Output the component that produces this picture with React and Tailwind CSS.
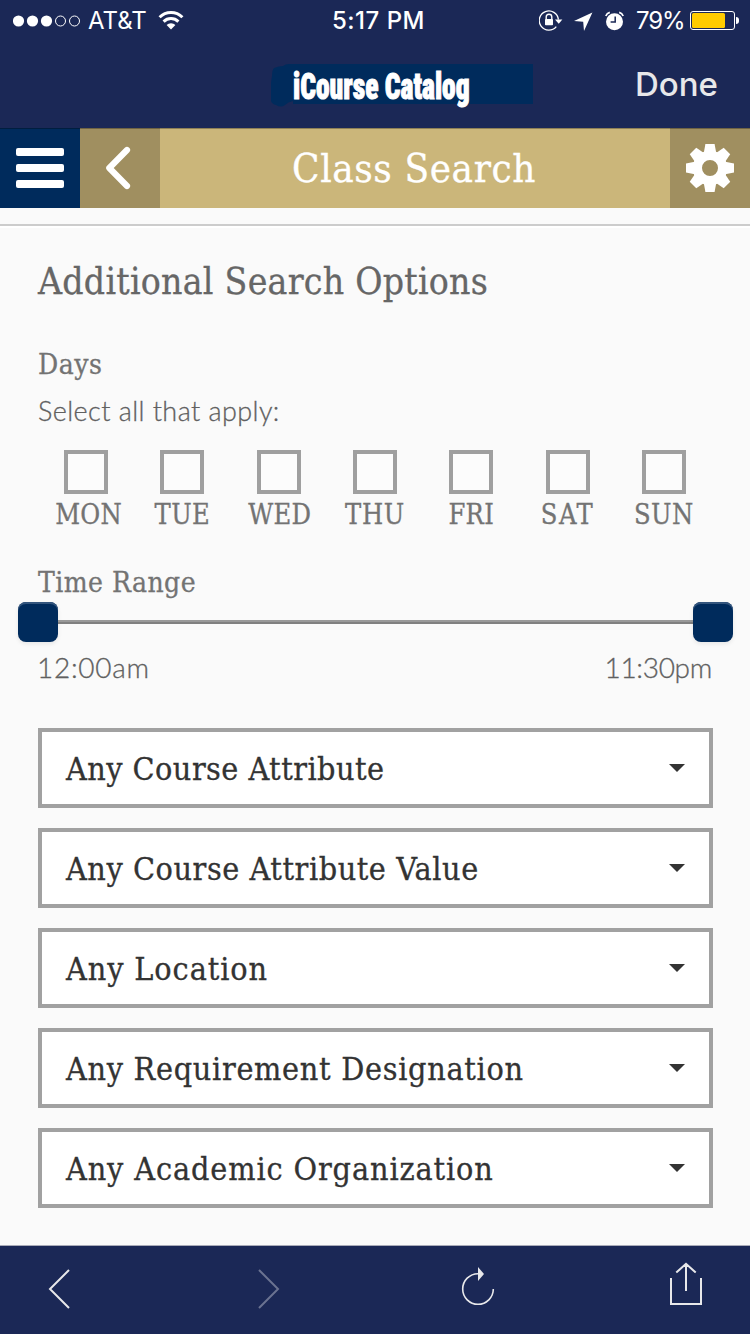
const DAYS = [
  { name: "MON", spacing: "pl-[5px] tracking-[0.3px]" },
  { name: "TUE", spacing: "tracking-[0.4px]" },
  { name: "WED", spacing: "pl-[2px] tracking-[0.2px]" },
  { name: "THU", spacing: "tracking-[0.7px]" },
  { name: "FRI", spacing: "tracking-[0.3px]" },
  { name: "SAT", spacing: "tracking-[1.5px]" },
  { name: "SUN", spacing: "tracking-[0.4px]" },
];

const SELECTS = [
  { label: "Any Course Attribute", tracking: "tracking-[0.46px]" },
  { label: "Any Course Attribute Value", tracking: "tracking-[0.56px]" },
  { label: "Any Location", tracking: "tracking-[0.9px]" },
  { label: "Any Requirement Designation", tracking: "tracking-[0.7px]" },
  { label: "Any Academic Organization", tracking: "tracking-[0.88px]" },
];

function SignalDots() {
  return (
    <svg className="h-[12px] w-[68px]" viewBox="0 0 68 12">
      <g fill="#fff">
        <circle cx="5.5" cy="6" r="5.6" />
        <circle cx="19.5" cy="6" r="5.6" />
        <circle cx="33.5" cy="6" r="5.6" />
      </g>
      <g fill="none" stroke="#fff" strokeWidth="1">
        <circle cx="47.5" cy="6" r="5" />
        <circle cx="61.5" cy="6" r="5" />
      </g>
    </svg>
  );
}

function Wifi() {
  return (
    <svg className="h-[19px] w-[26px]" viewBox="0 0 26 19">
      <g fill="none" stroke="#fff" strokeWidth="3">
        <path d="M1.6 6.3a16.2 16.2 0 0 1 22.8 0" />
        <path d="M5.6 10.6a10.5 10.5 0 0 1 14.8 0" />
      </g>
      <path d="M13 18.4 8.6 14a6.3 6.3 0 0 1 8.8 0z" fill="#fff" />
    </svg>
  );
}

function StatusIcons() {
  return (
    <svg className="h-[24px] w-[90px]" viewBox="0 0 90 24">
      <path d="M17.3 17.6A9.6 9.6 0 1 1 19.4 10.6" fill="none" stroke="#fff" strokeWidth="1.3" />
      <path d="M16 10.6h7.4l-3.7 4.2z" fill="#fff" />
      <path d="M7.2 10.6V8a2.8 2.8 0 0 1 5.6 0v2.6" fill="none" stroke="#fff" strokeWidth="1.4" />
      <rect x="6" y="9.9" width="8" height="6.4" rx="0.8" fill="#fff" />
      <path d="M53.4 3.4 45 22 44.2 12.8 35 12z" fill="#fff" />
      <circle cx="75.5" cy="12.7" r="8.5" fill="#fff" />
      <path d="M66.8 7a6 6 0 0 1 4-3.6M84.2 7a6 6 0 0 0-4-3.6" fill="none" stroke="#fff" strokeWidth="1.7" />
      <path d="M76.2 7.4v5.6h-4.6" fill="none" stroke="#1b2856" strokeWidth="1.5" />
    </svg>
  );
}

function Battery() {
  return (
    <div className="flex items-center gap-[1px]">
      <div className="h-[19px] w-[45px] rounded-[3px] border border-white p-[1px]">
        <div className="h-full w-[33px] rounded-[1.5px] bg-[#ffcc00]" />
      </div>
      <div className="h-[7px] w-[3px] rounded-r-full bg-white" />
    </div>
  );
}

function StatusBar() {
  return (
    <div className="grid h-[41px] grid-cols-[332px_207px_1fr] items-center font-['Inter',sans-serif] text-[24px] leading-none text-white">
      <div className="flex items-center pl-[13px]">
        <SignalDots />
        <span className="ml-[7px] w-[58px]">AT&amp;T</span>
        <div className="ml-[12px]">
          <Wifi />
        </div>
      </div>
      <span className="font-medium tracking-[0.5px]">5:17 PM</span>
      <div className="flex items-center">
        <StatusIcons />
        <span className="ml-[7px] w-[54px] tracking-[-1.1px]">79%</span>
        <Battery />
      </div>
    </div>
  );
}

function TitleBar() {
  return (
    <div className="flex h-[87px] justify-between pr-[32px] pl-[271px]">
      <div className="mt-[23px] flex h-[42px] items-start">
        <svg className="h-[43px] w-[22px]" viewBox="0 0 22 43">
          <path
            d="M22 0H18Q14 0 12 2Q8 2 3 4Q1 6 1 12Q-1 22 0 37Q1 40 5 41Q10 44 14 41Q17 38 22 37z"
            fill="#002b5c"
          />
        </svg>
        <div className="flex h-[40px] w-[240px] items-center bg-[#002b5c] pt-[6px]">
          <span className="origin-left scale-x-[0.765] font-['Roboto_Condensed','Roboto',sans-serif] text-[36px] leading-none font-black whitespace-nowrap text-white [-webkit-text-stroke:1px_white]">
            iCourse Catalog
          </span>
        </div>
      </div>
      <button className="font-['Inter',sans-serif] text-[33px] leading-none font-medium text-[#e8e8ea]">Done</button>
    </div>
  );
}

function NavBar() {
  return (
    <div className="grid h-[80px] grid-cols-[80px_80px_510px_80px] bg-[#cbb67a] shadow-[inset_0_1px_0_#8f8156]">
      <button className="flex flex-col items-center justify-center gap-[8px] bg-[#002b5c] shadow-[inset_0_1px_0_#001e40]">
        <span className="h-[8px] w-[48px] rounded-[2px] bg-white" />
        <span className="h-[8px] w-[48px] rounded-[2px] bg-white" />
        <span className="h-[8px] w-[48px] rounded-[2px] bg-white" />
      </button>
      <button className="bg-[#a08f60] shadow-[inset_0_1px_0_#706443]">
        <svg className="h-[80px] w-[80px]" viewBox="0 0 80 80">
          <path d="M47 22 29.3 40 47 58" fill="none" stroke="#fff" strokeWidth="6.2" strokeLinecap="round" strokeLinejoin="round" />
        </svg>
      </button>
      <h1 className="pt-px pr-[2px] text-center text-[40px] leading-[79px] tracking-[0.6px] text-white [-webkit-text-stroke:0.3px_currentColor]">
        Class Search
      </h1>
      <button className="bg-[#a08f60] shadow-[inset_0_1px_0_#706443]">
        <svg className="h-[80px] w-[80px]" viewBox="-40 -40 80 80">
          <g fill="#fff">
            {[0, 45, 90, 135, 180, 225, 270, 315].map((angle) => (
              <path key={angle} d="M-6.4-14-4.6-24H4.6L6.4-14z" transform={`rotate(${angle})`} />
            ))}
          </g>
          <circle r="12.6" fill="none" stroke="#fff" strokeWidth="9.2" />
        </svg>
      </button>
    </div>
  );
}

function DayPicker() {
  return (
    <div className="mt-[24px] mr-px grid grid-cols-7">
      {DAYS.map((day) => (
        <label key={day.name} className="flex flex-col items-center">
          <span className="size-[44px] border-4 border-[#9f9f9f] bg-[#fcfcfc]" />
          <span className={`mt-[6px] text-[27px] leading-[30px] ${day.spacing}`}>{day.name}</span>
        </label>
      ))}
    </div>
  );
}

function TimeSlider() {
  return (
    <div className="mx-[-20px] mt-px flex items-center">
      <div className="size-[40px] rounded-[8px] bg-[#002b5c] shadow-[inset_0_2px_0_#33557d,0_2px_4px_rgba(0,0,0,0.08)]" />
      <div className="h-[4px] flex-1 border-t-2 border-[#999] bg-[#808080]" />
      <div className="size-[40px] rounded-[8px] bg-[#002b5c] shadow-[inset_0_2px_0_#33557d,0_2px_4px_rgba(0,0,0,0.08)]" />
    </div>
  );
}

function SelectBox({ label, tracking }) {
  return (
    <button className="flex h-[80px] items-center justify-between border-4 border-[#a1a1a1] bg-white pr-[24px] pl-[24px] text-[#333]">
      <span className={`pt-[2px] text-[32px] leading-[40px] whitespace-nowrap ${tracking}`}>{label}</span>
      <svg className="h-[8px] w-[16px]" viewBox="0 0 16 8">
        <path d="M0 0h16L8 8z" fill="#333" />
      </svg>
    </button>
  );
}

function Toolbar() {
  return (
    <div className="flex h-[89px] items-center border-t border-[#a9abb8] bg-[#1b2856] pl-[48px] text-[#e8e8ea]">
      <svg className="h-[88px] w-[24px]" viewBox="0 0 24 88" fill="none" stroke="currentColor" strokeWidth="2">
        <path d="M21 24 2 43l19 19" />
      </svg>
      <svg className="ml-[186px] h-[88px] w-[24px] text-[#6b7391]" viewBox="0 0 24 88" fill="none" stroke="currentColor" strokeWidth="2">
        <path d="m1 24 19 19L1 62" />
      </svg>
      <svg className="ml-[179px] h-[88px] w-[34px]" viewBox="0 0 34 88">
        <path d="M32.3 43A15.3 15.3 0 1 1 17 27.7" fill="none" stroke="currentColor" strokeWidth="1.6" />
        <path d="M17 21v14l6-7z" fill="currentColor" />
      </svg>
      <svg className="ml-[175px] h-[88px] w-[32px]" viewBox="0 0 32 88" fill="none" stroke="currentColor" strokeWidth="2">
        <path d="M1 32v26h30V32M16 45V18M6.3 26.6 16 17.8l9.7 8.8" />
      </svg>
    </div>
  );
}

export default function App() {
  return (
    <div className="flex h-[1334px] w-[750px] flex-col overflow-hidden bg-[#fafafa] font-['DejaVu_Serif_Condensed','DejaVu_Serif',serif] text-[#737373]">
      <header className="bg-[#1b2856]">
        <StatusBar />
        <TitleBar />
      </header>
      <NavBar />
      <div className="mt-[16px] h-[4px] border-t-2 border-[#ccc] bg-white" />
      <main className="flex flex-1 flex-col pr-[37px] pl-[38px] [-webkit-text-stroke:0.3px_currentColor]">
        <h2 className="mt-[34px] text-[37px] leading-[40px] tracking-[0.25px] whitespace-nowrap text-[#666]">
          Additional Search Options
        </h2>
        <h3 className="mt-[45px] text-[28px] leading-[36px] tracking-[0.5px]">Days</h3>
        <p className="mt-[13px] font-['Lato',sans-serif] text-[27px] leading-[30px] font-light tracking-[0.42px] text-[#606060]">
          Select all that apply:
        </p>
        <DayPicker />
        <h3 className="mt-[35px] text-[28px] leading-[36px] tracking-[0.45px]">Time Range</h3>
        <TimeSlider />
        <div className="mt-[7px] flex justify-between pr-px font-['Lato',sans-serif] text-[28px] leading-[36px] font-light text-[#606060]">
          <span className="-ml-px tracking-[0.7px]">12:00am</span>
          <span className="tracking-[-0.3px]">11:30pm</span>
        </div>
        <div className="mt-[43px] flex flex-col gap-[20px]">
          {SELECTS.map((item) => (
            <SelectBox key={item.label} {...item} />
          ))}
        </div>
      </main>
      <Toolbar />
    </div>
  );
}
